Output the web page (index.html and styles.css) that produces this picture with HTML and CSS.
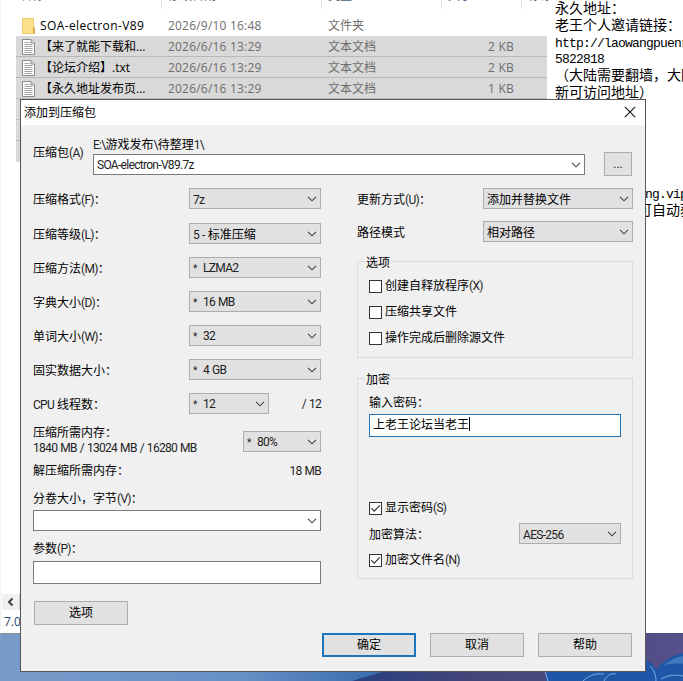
FILE: index.html
```html
<!DOCTYPE html>
<html lang="zh-CN">
<head>
<meta charset="utf-8">
<title>添加到压缩包</title>
<link rel="stylesheet" href="styles.css">
</head>
<body>
<svg width="0" height="0" class="defs">
  <symbol id="chev" viewBox="0 0 10 6"><path d="M1 .8 5 4.8 9 .8" fill="none" stroke="#444" stroke-width="1.1"/></symbol>
  <symbol id="tick" viewBox="0 0 11 11"><path d="M1.3 5.2 4.2 8.2 9.8 2.3" fill="none" stroke="#333" stroke-width="1.2"/></symbol>
  <symbol id="doc" viewBox="0 0 13 16"><path d="M.5.5h8.5l3.500 3.500v11.500h-12z" fill="#fff" stroke="#8a8a8a"/><path d="M9 .5v3.500h3.500" fill="#ddd" stroke="#8a8a8a"/><path d="M2.500 3.500h5M2.500 5.500h8M2.500 7.500h8M2.500 9.500h8M2.500 11.500h8M2.500 13.500h8" stroke="#a2a2a2"/></symbol>
</svg>
<div class="desktop">
  <svg class="wall" viewBox="0 0 683 48">
    <defs>
      <linearGradient id="sky" gradientUnits="userSpaceOnUse" x1="0" y1="0" x2="400" y2="0"><stop offset="0" stop-color="#789bc9"/><stop offset=".6" stop-color="#6690c6"/><stop offset="1" stop-color="#3567ab"/></linearGradient>
      <linearGradient id="dusk"><stop offset="0" stop-color="#27407f"/><stop offset=".35" stop-color="#43457a"/><stop offset="1" stop-color="#56508a"/></linearGradient>
    </defs>
    <rect width="683" height="48" fill="url(#sky)"/>
    <path d="M352 48 385 38V0h298v48z" fill="url(#dusk)"/>
    <path d="M546 48V37h99V27c6 2 10 6 11 10 6-8 14-14 27-17v28z" fill="#1f56a8"/>
    <path d="M664 32c6-5 12-8 19-9v8c-6-1-13 0-19 1z" fill="#3f78bd"/>
    <path d="M548 48l-3-10M583 48c6-6 14-8 21-7m0 7c3-6 7-8 12-7M650 33c4 4 6 9 6 15M661 46c5-3 13-5 22-3" fill="none" stroke="#79aee6"/>
  </svg>

  <section class="explorer">
    <div class="cols"><span class="c1">名称</span><span class="c2">修改日期</span><span class="c3">类型</span><span class="c4">大小</span><span class="c5">标记</span></div>
    <div class="files">
      <div class="file first"><svg class="fic" viewBox="0 0 13 16"><path d="M0 0h12v12l1 1v3H0z" fill="#ffe08a"/><path d="M.5.5h11v15H.5z" fill="none" stroke="#eccb6b"/><path d="M11.500 9.500h1v6h-1z" fill="none" stroke="#dcae42"/></svg><span class="name">SOA-electron-V89</span><span class="date">2026/9/10 16:48</span><span class="type">文件夹</span><span class="size"></span></div>
      <div class="file sel"><svg class="fic"><use href="#doc"/></svg><span class="name">【来了就能下载和...</span><span class="date">2026/6/16 13:29</span><span class="type">文本文档</span><span class="size">2 KB</span></div>
      <div class="file sel"><svg class="fic"><use href="#doc"/></svg><span class="name">【论坛介绍】.txt</span><span class="date">2026/6/16 13:29</span><span class="type">文本文档</span><span class="size">2 KB</span></div>
      <div class="file sel"><svg class="fic"><use href="#doc"/></svg><span class="name">【永久地址发布页...</span><span class="date">2026/6/16 13:29</span><span class="type">文本文档</span><span class="size">1 KB</span></div>
      <div class="file sel"></div><div class="file sel"></div><div class="file sel"></div>
    </div>
    <div class="hscroll"><svg viewBox="0 0 17 16"><path d="M10.500 4.500 7 8l3.500 3.500" fill="none" stroke="#444" stroke-width="2"/></svg><i></i></div>
    <div class="status">7.0</div>
  </section>

  <section class="notepad">
    <p>永久地址：</p>
    <p>老王个人邀请链接：</p>
    <p><span class="m">http://laowangpuenr</span></p>
    <p><span class="m">5822818</span></p>
    <p>（大陆需要翻墙，大陆</p>
    <p>新可访问地址）</p>
    <p class="far"><span class="m">ng.vip</span></p>
    <p class="far2">可自动获</p>
  </section>

  <section class="dialog">
    <header><span>添加到压缩包</span><svg viewBox="0 0 12 12"><path d="M.8.8l10.400 10.400M11.200.8.8 11.200" stroke="#111" stroke-width="1.1"/></svg></header>
    <div class="archive">
      <label>压缩包<b>(A)</b></label>
      <div class="path"><div class="dir"><b>E:\</b>游戏发布<b>\</b>待整理<b>1\</b></div>
        <div class="select edit"><b>SOA-electron-V89.7z</b><svg><use href="#chev"/></svg></div></div>
      <div class="btn dots"><b>...</b></div>
    </div>
    <div class="columns">
      <div class="left">
        <div class="row r1"><label>压缩格式<b>(F)</b>：</label><div class="select"><b>7z</b><svg><use href="#chev"/></svg></div></div>
        <div class="row"><label>压缩等级<b>(L)</b>：</label><div class="select"><span><b>5 - </b>标准压缩</span><svg><use href="#chev"/></svg></div></div>
        <div class="row"><label>压缩方法<b>(M)</b>：</label><div class="select"><span><b class="star">*</b><b>LZMA2</b></span><svg><use href="#chev"/></svg></div></div>
        <div class="row"><label>字典大小<b>(D)</b>：</label><div class="select"><span><b class="star">*</b><b>16 MB</b></span><svg><use href="#chev"/></svg></div></div>
        <div class="row"><label>单词大小<b>(W)</b>：</label><div class="select"><span><b class="star">*</b><b>32</b></span><svg><use href="#chev"/></svg></div></div>
        <div class="row"><label>固实数据大小：</label><div class="select"><span><b class="star">*</b><b>4 GB</b></span><svg><use href="#chev"/></svg></div></div>
        <div class="row cpu"><label><b>CPU </b>线程数：</label><div class="select"><span><b class="star">*</b><b>12</b></span><svg><use href="#chev"/></svg></div><b class="of">/ 12</b></div>
        <div class="mem"><div><div>压缩所需内存：</div><div><b>1840 MB / 13024 MB / 16280 MB</b></div></div><div class="select"><span><b class="star">*</b><b>80%</b></span><svg><use href="#chev"/></svg></div></div>
        <div class="unmem"><span>解压缩所需内存：</span><b>18 MB</b></div>
        <div class="lab">分卷大小，字节<b>(V)</b>：</div>
        <div class="select edit vol"><span></span><svg><use href="#chev"/></svg></div>
        <div class="lab par">参数<b>(P)</b>：</div>
        <div class="input"></div>
        <div class="btn opt">选项</div>
      </div>
      <div class="right">
        <div class="row r1"><label>更新方式<b>(U)</b>：</label><div class="select"><span>添加并替换文件</span><svg><use href="#chev"/></svg></div></div>
        <div class="row r2"><label>路径模式</label><div class="select"><span>相对路径</span><svg><use href="#chev"/></svg></div></div>
        <div class="group g1"><div class="legend"><span>选项</span></div>
          <div class="check"><i></i>创建自释放程序<b>(X)</b></div>
          <div class="check"><i></i>压缩共享文件</div>
          <div class="check"><i></i>操作完成后删除源文件</div>
        </div>
        <div class="group g2"><div class="legend"><span>加密</span></div>
          <div class="plab">输入密码：</div>
          <div class="input focus">上老王论坛当老王<i class="caret"></i></div>
          <div class="check show"><i><svg><use href="#tick"/></svg></i>显示密码<b>(S)</b></div>
          <div class="row alg"><label>加密算法：</label><div class="select"><b>AES-256</b><svg><use href="#chev"/></svg></div></div>
          <div class="check"><i><svg><use href="#tick"/></svg></i>加密文件名<b>(N)</b></div>
        </div>
      </div>
    </div>
    <footer><div class="btn ok">确定</div><div class="btn">取消</div><div class="btn">帮助</div></footer>
  </section>
</div>
</body>
</html>
```
FILE: styles.css
```css
* { box-sizing: border-box; }
body { margin: 0; font: 12px/16px Roboto, "Noto Sans CJK SC", sans-serif; color: #000; overflow: hidden; }
b { font-weight: 400; letter-spacing: -0.7px; word-spacing: .7px; white-space: pre; color: #222; }
p { margin: 0; }
.defs { position: absolute; }
.desktop { position: relative; width: 683px; height: 681px; overflow: hidden; }
.wall { position: absolute; left: 0; top: 633px; width: 683px; height: 48px; }

.explorer { position: absolute; left: 0; top: 0; width: 548px; height: 634px; background: #fff; border-left: 1px solid #f3f3f3; border-bottom: 1px solid #8c8c8c; font-family: "Open Sans", "Noto Sans CJK SC", sans-serif; display: flex; flex-direction: column; }
.cols { height: 9px; flex: none; display: flex; color: #4c607a; line-height: 16px; overflow: hidden; white-space: nowrap; }
.cols span { flex: none; margin-top: -12px; border-right: 1px solid #e3e3e3; height: 21px; }
.c1 { width: 161px; padding-left: 19px; }
.c2 { width: 160px; padding-left: 6px; }
.c3 { width: 120px; padding-left: 6px; }
.c4 { width: 80px; padding-left: 6px; }
.cols .c5 { width: 26px; padding-left: 6px; border: 0; overflow: hidden; }
.files { margin: 6px 0 0 15px; height: 148px; flex: none; }
.file { height: 21px; display: flex; align-items: center; padding-left: 6px; color: #6d6d6d; letter-spacing: .2px; white-space: nowrap; }
.file.sel { background: #d9d9d9; border-bottom: 1px solid #b9b9b9; width: 531px; padding-top: 2px; }
.file.sel:last-child { border: 0; }
.fic { width: 13px; height: 16px; margin-right: 5px; }
.name { width: 128px; color: #000; letter-spacing: 0; }
.first .name { letter-spacing: .38px; }
.date { width: 160px; }
.type { width: 120px; letter-spacing: 0; }
.size { width: 66px; text-align: right; }
.hscroll { margin: 431px 0 0 1px; height: 16px; background: #f0f0f0; display: flex; }
.hscroll svg { width: 17px; height: 16px; }
.hscroll i { width: 200px; background: #cdcdcd; }
.status { color: #26456b; padding: 4px 0 0 3px; }

.notepad { position: absolute; left: 548px; top: 0; width: 135px; height: 633px; background: #fff; padding-left: 7px; font: 14px/16.8px "Noto Sans CJK SC", sans-serif; white-space: nowrap; overflow: hidden; }
.notepad p { height: 16.8px; }
.notepad p:first-child { margin-top: -1px; }
.m { font-family: "Liberation Mono", monospace; font-size: 13px; letter-spacing: -.8px; }
.far { margin-top: 84px; padding-left: 90px; }
.far2 { padding-left: 83px; }

.dialog { position: absolute; left: 20px; top: 99px; width: 626px; height: 573px; background: #f0f0f0; border: 1px solid #55575b; display: flex; flex-direction: column; }
header { height: 25px; background: #fff; display: flex; justify-content: space-between; align-items: center; padding: 0 9px 0 3px; }
header svg { width: 12px; height: 12px; margin-bottom: 2px; }
.archive { display: flex; height: 63px; padding-left: 12px; }
.archive label { width: 60px; padding-top: 20px; }
.path { width: 492px; padding-top: 12px; }
.dir { height: 17px; }
.select { display: flex; align-items: center; justify-content: space-between; height: 21px; background: #e1e1e1; border: 1px solid #adadad; padding: 0 3px 0 3px; white-space: nowrap; }
.select svg { width: 10px; height: 6px; flex: none; }
.row .select > :first-child, .mem .select > :first-child { padding-top: 2px; }
.edit { background: #fff; border-color: #7a7a7a; }
.btn { background: #e1e1e1; border: 1px solid #adadad; height: 24px; width: 94px; text-align: center; line-height: 23px; }
.dots { width: 28px; margin: 27px 0 0 19px; }
.dots b { letter-spacing: 0; }
.columns { display: flex; gap: 36px; padding-left: 12px; }
.left { width: 288px; }
.right { width: 276px; }
.row { display: flex; align-items: center; height: 21px; margin-bottom: 13px; }
.row label { padding-top: 2px; }
.left label { width: 156px; }
.left .select { width: 132px; }
.r1 { margin-bottom: 14px; }
.star { display: inline-block; width: 10px; font-size: 10px; }
.left .cpu .select { width: 80px; }
.of { margin-left: auto; }
.mem { display: flex; justify-content: space-between; margin-top: -13px; height: 42px; align-items: flex-end; line-height: 15px; }
.left .mem .select { width: 78px; margin-bottom: 4px; }
.mem > div:first-child { width: 200px; }
.unmem { display: flex; justify-content: space-between; margin-top: 7px; }
.lab { margin-top: 12px; height: 19px; }
.left .vol { width: 288px; }
.par { margin-top: 10px; height: 20px; }
.input { height: 23px; background: #fff; border: 1px solid #7a7a7a; }
.opt { margin: 17px 0 0 1px; }
.right label { width: 126px; }
.right .select { width: 150px; }
.right .r1 { margin-bottom: 12px; }
.r2 { margin-bottom: 19px; }
.group { border: 1px solid #dcdcdc; padding-left: 11px; }
.legend { height: 15px; margin: -7px 0 0 -5px; }
.legend span { background: #f0f0f0; padding: 0 2px; display: inline-block; }
.g1 { height: 97px; margin-bottom: 20px; }
.check { display: flex; align-items: center; height: 16px; margin-bottom: 10px; }
.check i { width: 13px; height: 13px; border: 1px solid #333; background: #fff; margin-right: 3px; flex: none; display: flex; }
.check svg { width: 11px; height: 11px; }
.g1 .legend { margin-bottom: 8px; }
.g2 { height: 201px; }
.plab { margin-top: 8px; height: 19px; }
.focus { width: 252px; border-color: #2373b4; padding: 2px 3px 0; display: flex; }
.caret { width: 1px; height: 14px; background: #000; margin-top: 0; }
.show { margin: 63px 0 7px; }
.alg { margin-bottom: 8px; }
.right .alg label { width: 150px; }
.right .alg .select { width: 102px; }
footer { display: flex; gap: 14px; justify-content: flex-end; margin-top: auto; padding: 0 13px 14px 0; }
.ok { border: 2px solid #1b75bc; line-height: 21px; }
```
